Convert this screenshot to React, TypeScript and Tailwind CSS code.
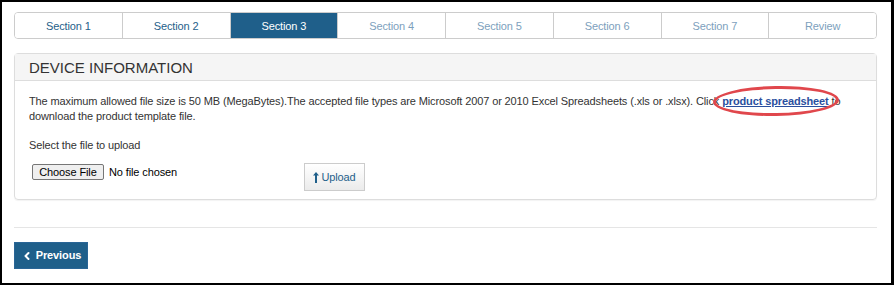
import { ChevronLeft } from "lucide-react";

const tabs = [
  { label: "Section 1", state: "done" },
  { label: "Section 2", state: "done" },
  { label: "Section 3", state: "active" },
  { label: "Section 4", state: "todo" },
  { label: "Section 5", state: "todo" },
  { label: "Section 6", state: "todo" },
  { label: "Section 7", state: "todo" },
  { label: "Review", state: "todo" },
];

export default function App() {
  return (
    <div className="h-[285px] w-[894px] bg-black font-['Liberation_Sans',Arial,sans-serif] text-[11px] tracking-[-0.12px] text-[#333]">
      <div className="h-full border-t-2 border-b-2 border-l-2 border-r-[3px] border-black bg-white px-[12px] pt-[10px]">
        <div className="w-[863px]">
          <div className="flex h-[27px] overflow-hidden rounded-[4px] border border-[#ccc]">
            {tabs.map((t, i) => (
              <div
                key={t.label}
                className={
                  "flex flex-1 items-center justify-center pt-px " +
                  (i > 0 ? "border-l border-[#ccc] " : "") +
                  (t.state === "active"
                    ? "bg-[#1f5f8a] text-white"
                    : t.state === "done"
                      ? "bg-white text-[#1f5f8a]"
                      : "bg-white text-[#7d9fbd]")
                }
              >
                {t.label}
              </div>
            ))}
          </div>

          <div className="mt-[14px] rounded-[4px] border border-[#ddd] shadow-[0_1px_1px_rgba(0,0,0,0.05)]">
            <div className="flex h-[27px] items-center border-b border-[#ddd] bg-[#f5f5f5] px-[14px] text-[15px] leading-none tracking-normal text-[#333]">
              DEVICE INFORMATION
            </div>
            <div className="px-[14px] pt-[13px] pb-[8px]">
              <p className="leading-[15px]">
                The maximum allowed file size is 50 MB (MegaBytes).The accepted file types are Microsoft 2007 or 2010 Excel
                Spreadsheets (.xls or .xlsx). Click{" "}
                <span className="relative whitespace-nowrap">
                  <a href="#" className="font-bold text-[#2b4f9e] underline">
                    product spreadsheet
                  </a>
                  <span className="pointer-events-none absolute -top-[9px] -bottom-[9px] -left-[9px] -right-[10px] -rotate-1 rounded-[50%] border-[3px] border-[#e0474c]" />
                </span>{" "}
                to download the product template file.
              </p>
              <p className="mt-[14px] leading-[15px]">Select the file to upload</p>
              <div className="mt-[10px] flex items-start">
                <div className="mt-px flex w-[275px] items-center pl-[3px]">
                  <span className="flex h-[16px] w-[72px] items-center justify-center rounded-[2px] border border-[#767676] bg-[#efefef] text-black">
                    Choose File
                  </span>
                  <span className="ml-[5px] text-black">No file chosen</span>
                </div>
                <button className="flex h-[28px] w-[61px] items-center justify-center gap-[2px] border border-[#ccc] bg-gradient-to-b from-white to-[#ebebeb] text-[#1f5f8a]">
                  <svg width="6" height="11" viewBox="0 0 6 11" fill="#1f5f8a">
                    <path d="M3 0 L6 3.5 H4 V11 H2 V3.5 H0 Z" />
                  </svg>
                  Upload
                </button>
              </div>
            </div>
          </div>

          <div className="mt-[27px] border-t border-[#e5e5e5]" />

          <button className="mt-[14px] flex h-[27px] w-[74px] items-center justify-center gap-[3px] border border-[#2a6596] bg-[#1f5f8a] font-bold text-white">
            <ChevronLeft size={12} strokeWidth={4} />
            Previous
          </button>
        </div>
      </div>
    </div>
  );
}
